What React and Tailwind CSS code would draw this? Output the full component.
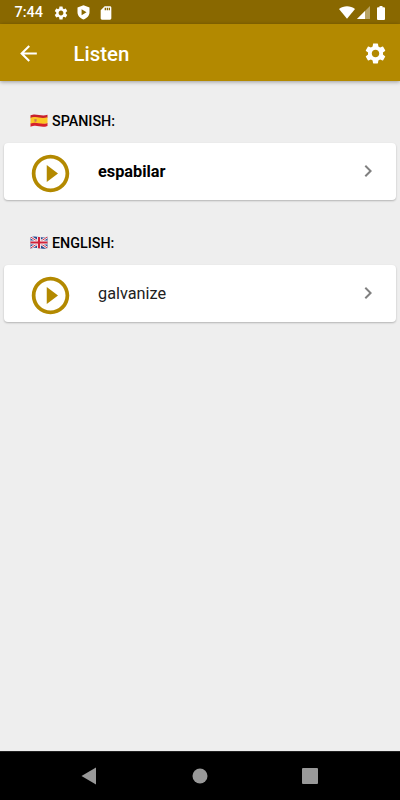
import {
  MdArrowBack,
  MdChevronRight,
  MdPlayCircleOutline,
  MdSdCard,
  MdSettings,
} from "react-icons/md";

function SpanishFlag() {
  return (
    <svg viewBox="0 0 18 13" className="w-[18px] h-[13px] shrink-0">
      <path d="M.5 1.3C4-.2 6 .5 9 1s5 1 8.5-.2v3C14 5 12 4.5 9 4S4 3.2.5 4.300z" fill="#c8202c" />
      <path d="M.5 3.7C4 2.5 6 3 9 3.6s5 .8 8.5-.3v6c-3.5 1.2-5.5.8-8.5.2S4 8.7.5 9.900z" fill="#fcc623" />
      <path d="M.5 9.5C4 8.3 6 8.7 9 9.3s5 .8 8.5-.4v3c-3.5 1.2-5.5.9-8.5.3S4 11.4.5 12.700z" fill="#d6202c" />
      <path d="M4.3 5h2.4v2.6q-1.2.8-2.4 0z" fill="#d08a4c" />
      <path d="M5 5.7h1v1.2H5z" fill="#d9606a" />
    </svg>
  );
}

function BritishFlag() {
  return (
    <svg viewBox="0 0 18 13" className="w-[18px] h-[13px] shrink-0">
      <clipPath id="uk-wave">
        <path d="M.5 1.3C4-.2 6 .5 9 1s5 1 8.5-.2v11.1c-3.5 1.2-5.5.9-8.5.3S4 11.4.5 12.700z" />
      </clipPath>
      <g clipPath="url(#uk-wave)">
        <path d="M0 0h18v13H0z" fill="#27498f" />
        <path d="M0 .5l18 12M18 .5l-18 12" stroke="#f2f2f5" strokeWidth="2.6" />
        <path d="M0 .5l18 12M18 .5l-18 12" stroke="#d0223a" strokeWidth=".9" />
        <path d="M9 0v13M0 6.5h18" stroke="#f5f5f7" strokeWidth="4" />
        <path d="M9 0v13M0 6.5h18" stroke="#d0223a" strokeWidth="2.2" />
      </g>
    </svg>
  );
}

const WORDS = [
  { label: "SPANISH:", word: "espabilar", Flag: SpanishFlag, bold: true },
  { label: "ENGLISH:", word: "galvanize", Flag: BritishFlag, bold: false },
];

function StatusBar() {
  return (
    <div className="h-6 bg-[#896800] text-white flex items-center justify-between pl-[14.5px] pr-[15px]">
      <div className="flex items-center pt-px">
        <span className="w-[38.5px] pt-[2px] text-[14.5px] leading-none font-medium">7:44</span>
        <MdSettings className="w-4 h-4" />
        <svg viewBox="0 0 13 15" className="w-[13px] h-[15px] ml-[8px]">
          <path
            d="M6.5.3l6 2.2v4.7c0 3.3-2.5 6-6 7.3-3.5-1.3-6-4-6-7.3V2.5zM4.6 4.2v6L9.5 7.2z"
            fill="currentColor"
            fillRule="evenodd"
          />
        </svg>
        <MdSdCard className="w-4 h-4 ml-[7.5px]" />
      </div>
      <div className="flex items-center pt-px">
        <svg viewBox="0 0 16 13" className="w-4 h-[13px]">
          <path d="M0 2.9C4.5-.7 11.5-.7 16 2.9L8 12.7z" fill="currentColor" />
        </svg>
        <svg viewBox="0 0 13 13" className="w-[13px] h-[13px] ml-[2px]">
          <path d="M13 0v13H0z" fill="currentColor" fillOpacity=".4" />
          <path d="M8 5v8H0z" fill="currentColor" />
        </svg>
        <svg viewBox="0 0 8 14" className="w-2 h-[14px] ml-[7px]">
          <path d="M2.5 0h3v1.3H7q1 0 1 1V13q0 1-1 1H1q-1 0-1-1V2.3q0-1 1-1h1.5z" fill="currentColor" />
        </svg>
      </div>
    </div>
  );
}

function AppBar() {
  return (
    <header className="h-[57px] bg-[#b38900] text-white flex items-center pl-4 pr-3 shadow-[0_1px_4px_rgba(0,0,0,0.35)]">
      <MdArrowBack className="mt-px w-[25px] h-[25px]" />
      <h1 className="ml-[32.5px] pt-[3px] text-[20.4px] leading-6 font-medium">Listen</h1>
      <MdSettings className="ml-auto mt-px w-[25px] h-[25px]" />
    </header>
  );
}

function WordSection({ label, word, Flag, bold }) {
  return (
    <section className="h-[122px]">
      <div className="h-[61.5px] pt-[31px] pl-[30px] flex items-start">
        <div className="flex items-center gap-[4px] h-[17px]">
          <Flag />
          <h2 className="pt-px text-[14.3px] leading-[17px] font-medium text-black">{label}</h2>
        </div>
      </div>
      <div className="mx-1 h-[57px] rounded-[4px] bg-white flex items-center shadow-[0_1px_2px_rgba(0,0,0,0.25)]">
        <MdPlayCircleOutline className="w-[45px] h-[45px] ml-[24.4px] mt-[4px] text-[#b38900]" />
        <span
          className={`ml-[24.6px] pt-px text-[16.3px] leading-5 ${
            bold ? "font-bold text-black" : "font-normal text-[#212121]"
          }`}
        >
          {word}
        </span>
        <MdChevronRight className="ml-auto mr-[16.5px] mb-px w-6 h-6 text-[#808080]" />
      </div>
    </section>
  );
}

function NavigationBar() {
  return (
    <nav className="h-[49px] bg-black border-t border-[#222] flex justify-center items-center text-[#999]">
      <svg viewBox="0 0 240 20" className="w-[240px] h-5" fill="currentColor">
        <path d="M1.5 10L16 1.5v17z" />
        <circle cx="120" cy="10" r="7.5" />
        <rect x="222" y="2" width="16" height="16" rx="1" />
      </svg>
    </nav>
  );
}

export default function App() {
  return (
    <div className="h-screen bg-[#eee] flex flex-col font-['Roboto','Liberation_Sans',sans-serif]">
      <StatusBar />
      <AppBar />
      <main className="flex-1">
        {WORDS.map((item) => (
          <WordSection key={item.label} {...item} />
        ))}
      </main>
      <NavigationBar />
    </div>
  );
}
